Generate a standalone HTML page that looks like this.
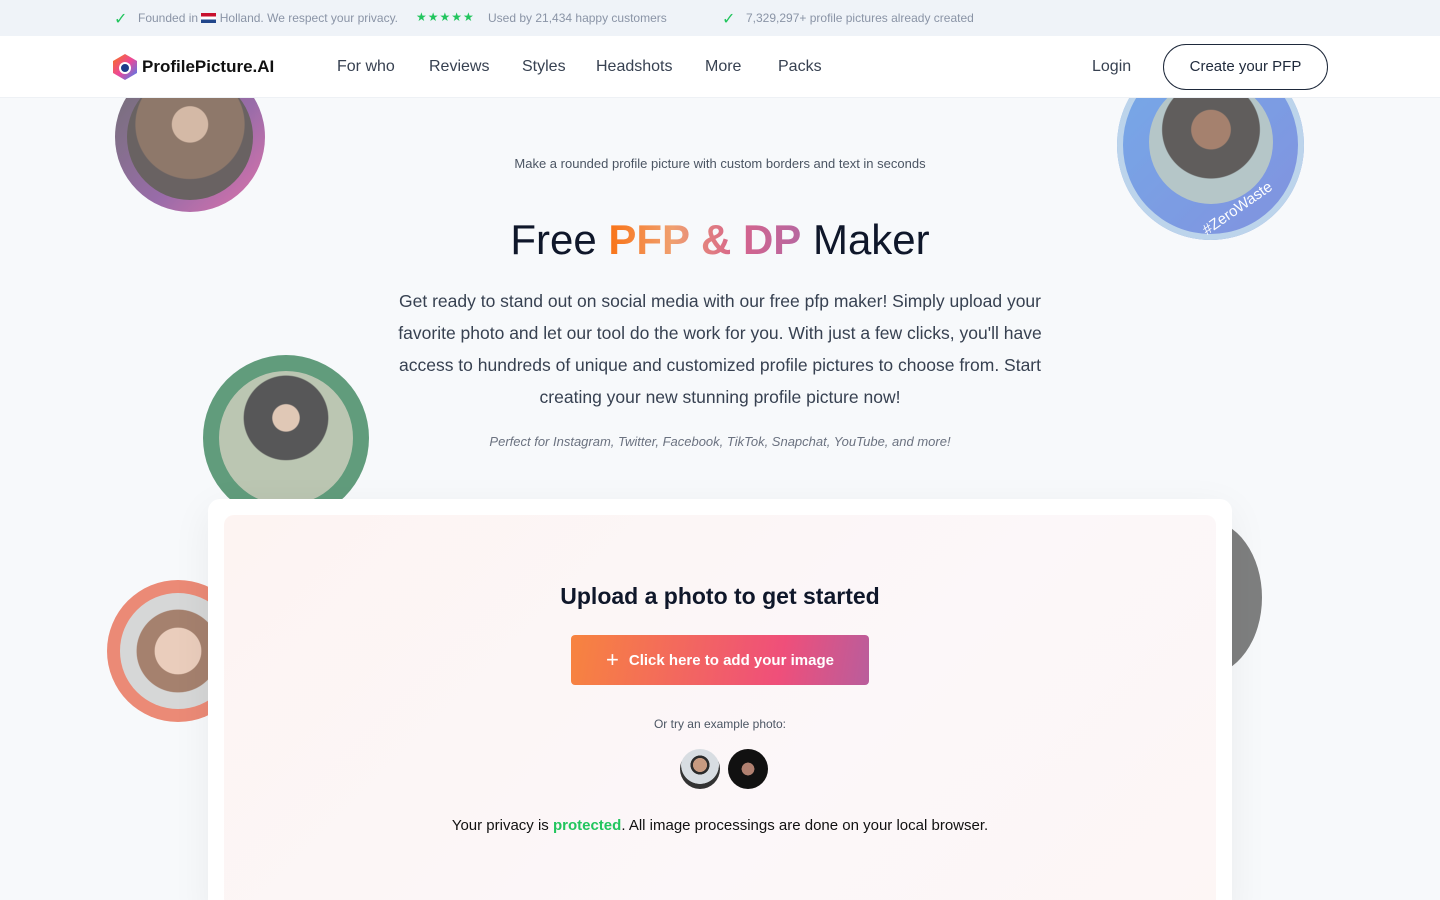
<!DOCTYPE html>
<html><head><meta charset="utf-8"><style>
*{margin:0;padding:0;box-sizing:border-box}
html,body{width:1440px;height:900px;overflow:hidden}
body{background:#f7f9fb;font-family:"Liberation Sans",sans-serif;position:relative;color:#1e293b}
.top{height:36px;background:#eff3f8;font-size:12px;color:#8a94a6;position:relative}
.top span{position:absolute;top:11px}
.nav{height:62px;background:#fff;border-bottom:1px solid #eef1f5;position:relative;z-index:3}
.nav a{position:absolute;top:22px;font-size:16px;color:#374151}
.btn{position:absolute;left:1163px;top:8px;width:165px;height:46px;border:1.5px solid #1e293b;border-radius:24px;text-align:center;line-height:43px;font-size:15px;color:#1e293b}
.circ{position:absolute;border-radius:50%;opacity:.75}
.circ .in{position:absolute;border-radius:50%}
.c{position:absolute;left:0;width:1440px;text-align:center}
</style></head><body>
<div class="top">
<span style="left:114px;top:9px;color:#22c55e;font-size:16px">✓</span>
<span style="left:138px">Founded in <span style="position:static;display:inline-block;width:15px;height:10px;background:linear-gradient(#c8102e 33%,#fff 33% 66%,#21468b 66%);vertical-align:-1px"></span> Holland. We respect your privacy.</span>
<span style="left:416px;top:10px;color:#22c55e;font-size:12px;letter-spacing:1px">★★★★★</span>
<span style="left:488px">Used by 21,434 happy customers</span>
<span style="left:722px;top:9px;color:#22c55e;font-size:16px">✓</span>
<span style="left:746px">7,329,297+ profile pictures already created</span>
</div>
<div class="nav">
<svg style="position:absolute;left:112px;top:17px" width="26" height="28" viewBox="0 0 26 28"><defs><linearGradient id="g" x1="0" y1="0" x2="1" y2="1"><stop offset="0" stop-color="#f97316"/><stop offset=".5" stop-color="#ec4899"/><stop offset="1" stop-color="#3b82f6"/></linearGradient></defs><path d="M13 1 L25 8 V20 L13 27 L1 20 V8 Z" fill="url(#g)"/><circle cx="13" cy="15" r="6" fill="#fff"/><circle cx="13" cy="15" r="4" fill="#1e3a8a"/></svg>
<span style="position:absolute;left:142px;top:21px;font-size:17px;font-weight:bold;color:#111">ProfilePicture.AI</span>
<a style="left:337px">For who</a><a style="left:429px">Reviews</a><a style="left:522px">Styles</a><a style="left:596px">Headshots</a><a style="left:705px">More</a><a style="left:778px">Packs</a>
<a style="left:1092px">Login</a>
<div class="btn">Create your PFP</div>
</div>
<div class="circ" style="left:115px;top:62px;width:150px;height:150px;background:linear-gradient(135deg,#444 0%,#7a3e8e 60%,#d9468f 100%)"><div class="in" style="left:12px;top:12px;width:126px;height:126px;background:radial-gradient(circle at 50% 40%,#c9a48a 0 18%,#6b4d3a 19% 55%,#3a3030 56%)"></div></div>
<div class="circ" style="left:1117px;top:50px;width:187px;height:190px;background:linear-gradient(135deg,#4a90e2,#5b6fd6);box-shadow:inset 0 0 0 6px #a9c8e6"><div class="in" style="left:32px;top:30px;width:124px;height:124px;background:radial-gradient(circle at 50% 40%,#8a5a40 0 20%,#2e2a28 21% 50%,#9fb5b8 51%)"></div><span style="position:absolute;left:80px;top:150px;color:#fff;font-size:15px;transform:rotate(-35deg)">#ZeroWaste</span></div>
<div class="circ" style="left:203px;top:355px;width:166px;height:166px;background:#2f7d52"><div class="in" style="left:16px;top:16px;width:134px;height:134px;background:radial-gradient(circle at 50% 35%,#d9b8a0 0 12%,#222 13% 38%,#a8b59a 39%)"></div></div>
<div class="circ" style="left:107px;top:580px;width:142px;height:142px;background:#e8664a"><div class="in" style="left:13px;top:13px;width:116px;height:116px;background:radial-gradient(circle at 50% 50%,#e6bfa8 0 28%,#8a5a40 29% 50%,#ccc 51%)"></div></div>
<div class="circ" style="left:1150px;top:520px;width:112px;height:155px;border-radius:50%;background:#555"></div>
<div class="c" style="top:156px;font-size:13px;color:#4b5563">Make a rounded profile picture with custom borders and text in seconds</div>
<div class="c" style="top:216px;font-size:42px;color:#0f172a">Free <span style="background:linear-gradient(90deg,#f97316,#f0a070,#d6648c,#b767a0);-webkit-background-clip:text;color:transparent;font-weight:bold">PFP &amp; DP</span> Maker</div>
<div class="c" style="top:285px;left:385px;width:670px;font-size:17.5px;line-height:32px;color:#374151">Get ready to stand out on social media with our free pfp maker! Simply upload your favorite photo and let our tool do the work for you. With just a few clicks, you'll have access to hundreds of unique and customized profile pictures to choose from. Start creating your new stunning profile picture now!</div>
<div class="c" style="top:434px;font-size:13px;font-style:italic;color:#6b7280">Perfect for Instagram, Twitter, Facebook, TikTok, Snapchat, YouTube, and more!</div>
<div style="position:absolute;left:208px;top:499px;width:1024px;height:420px;background:#fff;border-radius:12px;box-shadow:0 10px 40px rgba(0,0,0,.06);z-index:2">
<div style="position:absolute;left:16px;top:16px;right:16px;bottom:0;border-radius:10px;background:linear-gradient(135deg,#fdf4f2,#fcf7f9 60%,#fdf6f5)">
<div style="position:absolute;top:68px;width:100%;text-align:center;font-size:23px;font-weight:bold;color:#0f172a">Upload a photo to get started</div>
<div style="position:absolute;left:347px;top:120px;width:298px;height:50px;border-radius:4px;background:linear-gradient(100deg,#f7843f,#ef4f7a 70%,#b95d9c);color:#fff;font-weight:bold;font-size:15px;line-height:50px;text-align:center"><span style="font-weight:normal;font-size:22px;vertical-align:-2px;margin-right:10px">+</span>Click here to add your image</div>
<div style="position:absolute;top:202px;width:100%;text-align:center;font-size:12px;color:#4b5563">Or try an example photo:</div>
<div style="position:absolute;left:456px;top:234px;width:40px;height:40px;border-radius:50%;background:radial-gradient(circle at 50% 40%,#c79a80 0 22%,#2a2a2a 23% 30%,#d8dde2 31% 60%,#333 61%)"></div>
<div style="position:absolute;left:504px;top:234px;width:40px;height:40px;border-radius:50%;background:radial-gradient(circle at 50% 50%,#b08070 0 22%,#111 23%)"></div>
<div style="position:absolute;top:302px;width:100%;text-align:center;font-size:15px;color:#111">Your privacy is <b style="color:#22c55e">protected</b>. All image processings are done on your local browser.</div>
</div></div>
</body></html>
